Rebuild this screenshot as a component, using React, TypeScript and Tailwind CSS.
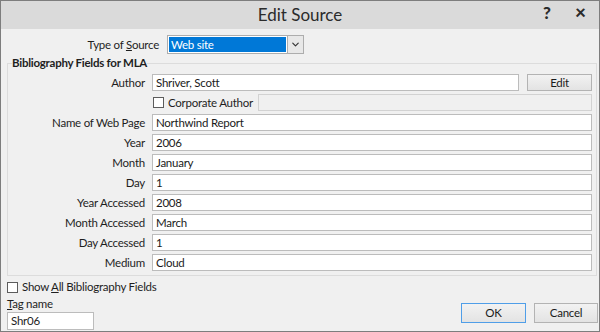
import { ChevronDown } from 'lucide-react';

const fields = [
  { label: 'Name of Web Page', value: 'Northwind Report' },
  { label: 'Year', value: '2006' },
  { label: 'Month', value: 'January' },
  { label: 'Day', value: '1' },
  { label: 'Year Accessed', value: '2008' },
  { label: 'Month Accessed', value: 'March' },
  { label: 'Day Accessed', value: '1' },
  { label: 'Medium', value: 'Cloud' },
];

const inputCls = 'flex h-[17px] items-center border border-[#bcbcbc] bg-white px-[3px] leading-none text-[#1a1a1a]';
const buttonCls =
  'flex items-center justify-center border bg-gradient-to-b from-[#f2f2f2] to-[#e3e3e3] leading-none text-[#1a1a1a]';

function Checkbox() {
  return <span className="block h-[11px] w-[11px] shrink-0 border border-[#5c5c5c] bg-white" />;
}

export default function App() {
  return (
    <div className="flex h-[332px] w-[600px] flex-col overflow-hidden border border-[#7d7d7d] bg-[#f0f0f0] font-['Segoe_UI','Lato',sans-serif] text-[11.5px] leading-[16px] tracking-[-0.25px] whitespace-nowrap text-[#1e1e1e]">
      <div className="relative flex h-[28px] shrink-0 items-center justify-center bg-[#dadada] text-[17px] tracking-normal text-[#2b2b2b]">
        Edit Source
        <span className="absolute right-[48px] top-[4px] text-[17px] font-black">?</span>
        <span className="absolute right-[13px] top-[3px] text-[19px] font-black">×</span>
      </div>

      <div className="flex flex-1 flex-col pl-[6px] pr-[1px]">
        <div className="mt-[6px] flex h-[19px] items-center gap-[8px]">
          <span className="w-[152px] text-right">
            Type of <span className="underline">S</span>ource
          </span>
          <div className="flex h-[19px] w-[137px] border border-[#adadad] bg-white">
            <div className="m-[1px] flex flex-1 items-center bg-[#0078d7] px-[2px] text-white">Web site</div>
            <div className="flex w-[16px] items-center justify-center border-l border-[#adadad] bg-[#e8e8e8]">
              <ChevronDown size={11} strokeWidth={2.5} className="text-[#333]" />
            </div>
          </div>
        </div>

        <fieldset className="mt-[1px] w-[590px] border border-[#dcdcdc] pb-[4px] pr-[4px]">
          <legend className="ml-[4px] font-bold leading-[16px]">Bibliography Fields for MLA</legend>
          <div className="mt-[3px] flex flex-col gap-[3px]">
            <div className="flex items-center">
              <span className="w-[137px] text-right">Author</span>
              <div className={`${inputCls} ml-[7px] w-[367px]`}>Shriver, Scott</div>
              <button className={`${buttonCls} ml-[8px] h-[17px] w-[65px] border-[#b3b3b3]`}>Edit</button>
            </div>
            <div className="flex items-center">
              <div className="ml-[145px] flex w-[105px] items-center gap-[4px]">
                <Checkbox />
                <span>Corporate Author</span>
              </div>
              <div className="h-[17px] w-[334px] border border-[#d2d2d2] bg-[#f0f0f0]" />
            </div>
            {fields.map((f) => (
              <div key={f.label} className="flex items-center">
                <span className="w-[137px] text-right">{f.label}</span>
                <div className={`${inputCls} ml-[7px] w-[440px]`}>{f.value}</div>
              </div>
            ))}
          </div>
        </fieldset>

        <div className="flex flex-1 items-start justify-between">
          <div className="flex flex-col">
            <div className="mt-[3px] flex items-center gap-[4px]">
              <Checkbox />
              <span>
                Show <span className="underline">A</span>ll Bibliography Fields
              </span>
            </div>
            <span className="mt-[1px]">
              <span className="underline">T</span>ag name
            </span>
            <div className="flex h-[18px] w-[87px] items-center border border-[#bcbcbc] bg-white px-[3px]">Shr06</div>
          </div>
          <div className="mt-[27px] flex gap-[8px]">
            <button className={`${buttonCls} h-[20px] w-[65px] border-[#4f9ee8]`}>OK</button>
            <button className={`${buttonCls} h-[20px] w-[64px] border-[#b3b3b3]`}>Cancel</button>
          </div>
        </div>
      </div>
    </div>
  );
}
